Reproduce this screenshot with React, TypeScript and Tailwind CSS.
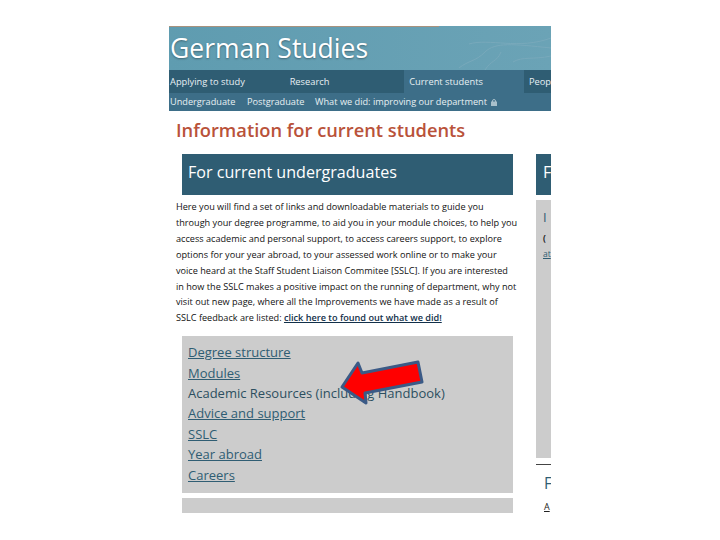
const para = [
  "Here you will find a set of links and downloadable materials to guide you",
  "through your degree programme, to aid you in your module choices, to help you",
  "access academic and personal support, to access careers support, to explore",
  "options for your year abroad, to your assessed work online or to make your",
  "voice heard at the Staff Student Liaison Commitee [SSLC]. If you are interested",
  "in how the SSLC makes a positive impact on the running of department, why not",
  "visit out new page, where all the Improvements we have made as a result of",
];
const links: [string, boolean][] = [
  ["Degree structure", true],
  ["Modules", true],
  ["Academic Resources (including Handbook)", false],
  ["Advice and support", true],
  ["SSLC", true],
  ["Year abroad", true],
  ["Careers", true],
];

export default function App() {
  return (
    <div className="w-[720px] h-[540px] bg-white overflow-hidden pt-[26px] pl-[169px] font-['Open_Sans',sans-serif]">
      <div className="relative w-[382px] h-[487px] overflow-hidden">
        <div className="h-[44px] relative overflow-hidden bg-gradient-to-r from-[#5f9cb0] to-[#6ba3b6] flex flex-col">
          <div className="h-[1px] w-[270px] bg-[#a8927e]" />
          <span className="text-[26.5px] leading-[42px] text-white pl-[1px] [text-shadow:0_1px_2px_rgba(0,0,0,0.35)]">German Studies</span>
          <svg className="absolute left-[260px] top-0" width="122" height="44" viewBox="0 0 122 44" fill="none" stroke="#78a9bb" strokeWidth="1">
            <path d="M30 42C40 34 46 36 56 26S84 18 122 22" />
            <path d="M40 18C60 12 90 24 122 12" />
            <path d="M56 44C62 34 68 36 72 26" />
            <path d="M84 36C94 30 104 34 122 30" />
          </svg>
        </div>
        <div className="h-[23px] bg-[#2f5d73] flex text-[9.3px] text-[#e8f0f3] leading-[23px]">
          <div className="w-[121px] pl-[1px]">Applying to study</div>
          <div className="w-[115px]">Research</div>
          <div className="w-[120px] pl-[5px] bg-[#3d6e88]">Current students</div>
          <div className="pl-[5px]">Peop</div>
        </div>
        <div className="h-[18px] bg-[#3d6e88] flex items-center text-[9.2px] text-[#e8f0f3] pl-[1px]">
          <span className="w-[77px]">Undergraduate</span>
          <span className="w-[68px]">Postgraduate</span>
          <span>What we did: improving our department</span>
          <svg className="ml-[4px]" width="6" height="7" viewBox="0 0 6 7" fill="none" stroke="#a9c0cb" strokeWidth="1">
            <path d="M1.5 3V2a1.5 1.5 0 0 1 3 0v1" />
            <rect x="0.5" y="3" width="5" height="3.5" fill="#a9c0cb" />
          </svg>
        </div>
        <h1 className="mt-[9px] ml-[7px] text-[18.3px] leading-[20px] font-semibold text-[#b9523a] whitespace-nowrap">
          Information for current students
        </h1>
        <div className="flex mt-[14px] ml-[13px] gap-[23px]">
          <div className="w-[331px] shrink-0">
            <div className="h-[41px] bg-[#2f5d73] text-white text-[16.1px] font-medium leading-[37px] pl-[6px]">For current undergraduates</div>
            <div className="mt-[4px] text-[9.15px] leading-[15.9px] text-[#111] whitespace-nowrap ml-[-6px]">
              {para.map((l) => <div key={l}>{l}</div>)}
              <div>
                SSLC feedback are listed:{" "}
                <span className="font-semibold underline text-[#12304a]">click here to found out what we did!</span>
              </div>
            </div>
            <div className="mt-[10px] h-[157px] bg-[#cccccc] pl-[6px] pt-[6px] text-[13px] font-medium leading-[20.4px] text-[#2f5d73]">
              {links.map(([t, u]) => <div key={t} className={u ? "underline" : "text-[#2c4f60]"}>{t}</div>)}
            </div>
            <div className="mt-[5px] h-[15px] bg-[#cccccc]" />
          </div>
          <div className="w-[15px] shrink-0 overflow-hidden">
            <div className="h-[41px] bg-[#2f5d73] text-white text-[16px] font-medium leading-[37px] pl-[7px]">F</div>
            <div className="mt-[5px] h-[258px] bg-[#cccccc] pl-[7px] pt-[8px] whitespace-nowrap">
              <div className="text-[13px] leading-[18px] text-[#2f5d73]">I</div>
              <div className="mt-[5px] text-[8.5px] leading-[14px] font-bold text-[#222]">(</div>
              <div className="mt-[2px] text-[8.5px] leading-[14px] underline text-[#2f5d73]">at</div>
            </div>
            <div className="mt-[6px] border-t border-[#444] pt-[8px] pl-[8px] whitespace-nowrap">
              <div className="text-[15.5px] leading-[20px] text-[#2f5d73]">F</div>
              <div className="mt-[7px] text-[9px] leading-[13px] underline text-[#222]">A</div>
            </div>
          </div>
        </div>
        <svg className="absolute left-[170px] top-[334px]" width="86" height="46" viewBox="0 0 86 46">
          <polygon points="3,27 19,3 23,13 79,2 83,22 26,33 27,43" fill="#ff0000" stroke="#3b5a86" strokeWidth="3" strokeLinejoin="round" />
        </svg>
      </div>
    </div>
  );
}
